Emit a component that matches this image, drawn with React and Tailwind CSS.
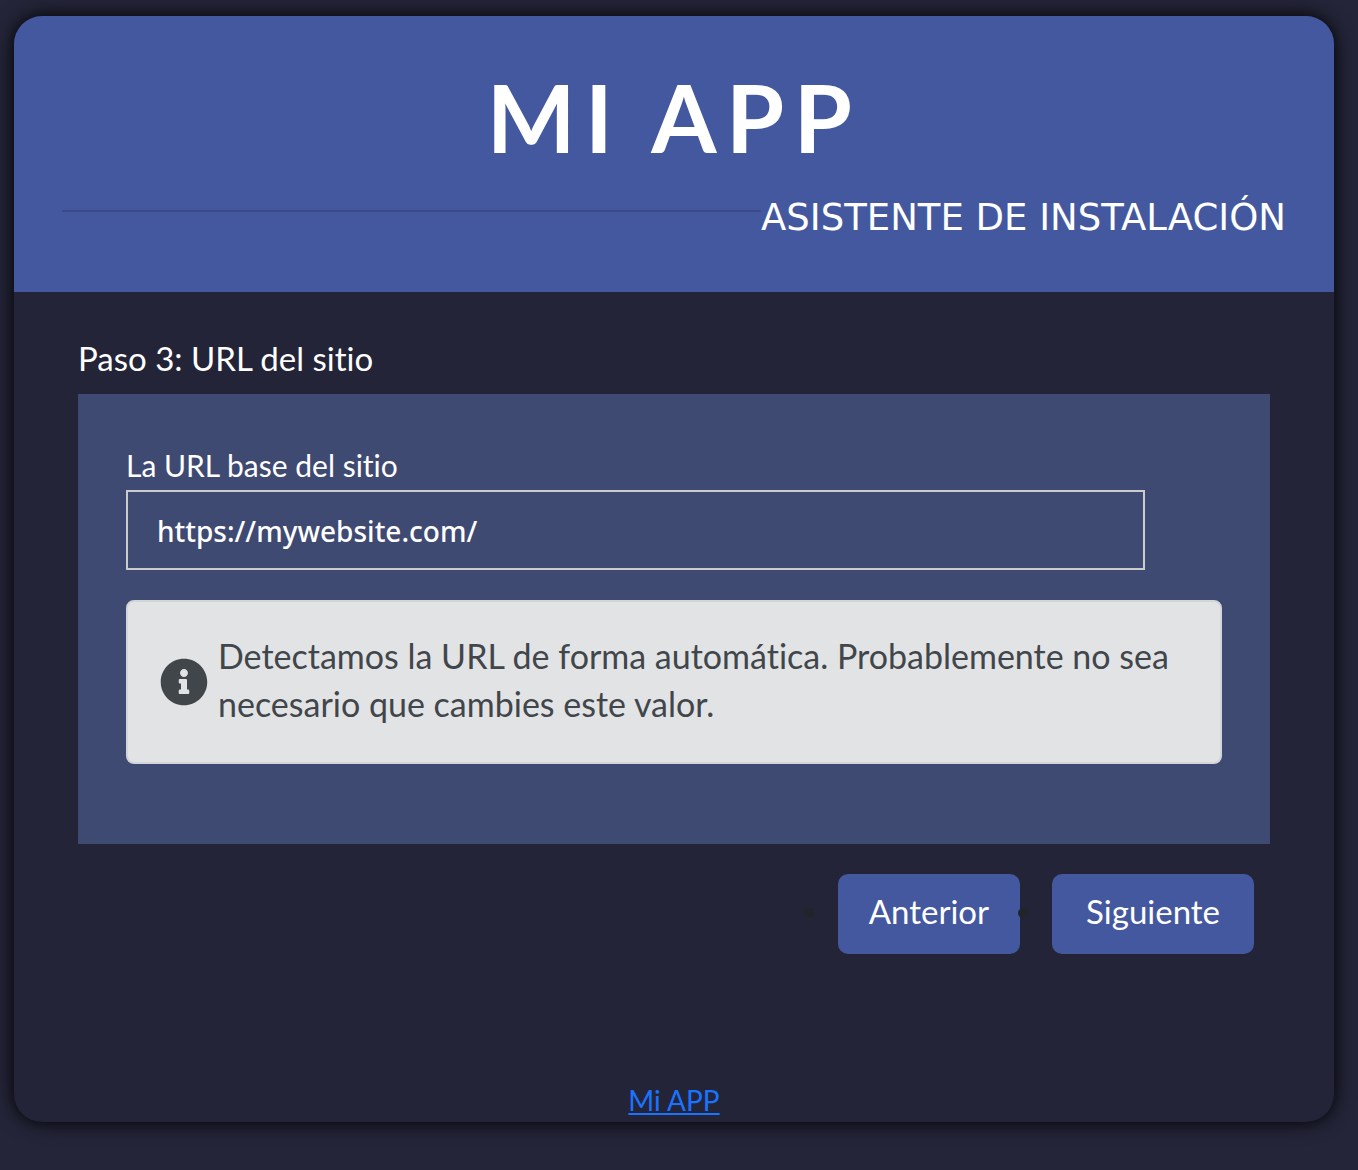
import React from "react";
import { FaInfoCircle } from "react-icons/fa";

function Header() {
  return (
    <header className="rounded-t-[28px] bg-[#44589f] px-12 pt-7 pb-[50px] text-white">
      <h1 className="mb-5 text-center text-[94px] leading-[146px] font-bold tracking-widest">
        MI APP
      </h1>
      <div className="flex items-start">
        <hr className="grow border-0 border-t-2 border-[#3d4a85]" />
        <h2 className="-mt-3 mb-1 font-['DejaVu_Sans',sans-serif] text-[37px] leading-10 font-normal">
          ASISTENTE DE INSTALACIÓN
        </h2>
      </div>
    </header>
  );
}

function UrlStep() {
  return (
    <fieldset className="block">
      <legend className="pb-[18px] text-[33px] leading-9 text-white">Paso 3: URL del sitio</legend>
      <div className="bg-[#3f4a73] px-12 pt-[50px] pb-20">
        <label htmlFor="base-url" className="block pb-1 text-[30px] leading-[42px] text-white">
          La URL base del sitio
        </label>
        <input
          id="base-url"
          type="text"
          defaultValue="https://mywebsite.com/"
          className="block h-20 w-[93%] border-2 border-[#ccc] bg-transparent px-[29px] pt-0.5 font-['Noto_Sans',sans-serif] text-[28px] font-medium text-white outline-none"
        />
        <div className="mt-[30px] flex items-center gap-[10px] rounded-lg border-2 border-[#d3d6d8] bg-[#e2e3e5] px-8 py-[30px] text-[#41464b]">
          <FaInfoCircle className="size-12 shrink-0" aria-hidden="true" />
          <p className="pb-1 text-[34px] leading-[48px]">
            Detectamos la URL de forma automática. Probablemente no sea necesario que cambies este
            valor.
          </p>
        </div>
      </div>
    </fieldset>
  );
}

function Action({ children }) {
  return (
    <li className="relative ml-8">
      <span
        className="absolute top-[34px] -left-[34px] size-[10px] rounded-full bg-[#212529]"
        aria-hidden="true"
      />
      <button
        type="button"
        className="h-20 rounded-[10px] bg-[#44589f] px-[31px] pb-1 text-[33px] text-white"
      >
        {children}
      </button>
    </li>
  );
}

export default function App() {
  return (
    <div className="min-h-screen bg-[#242539] pt-4 pr-6 pb-12 pl-[14px] font-['Lato',sans-serif] [font-variant-ligatures:none]">
      <main className="rounded-[28px] bg-[#242438] shadow-[0_0_20px_#000]">
        <Header />
        <form className="px-16 pt-12" onSubmit={(e) => e.preventDefault()}>
          <UrlStep />
          <ul className="mt-[30px] flex justify-end pr-4">
            <Action>Anterior</Action>
            <Action>
              <span className="px-[3px]">Siguiente</span>
            </Action>
          </ul>
        </form>
        <footer className="pt-[124px] text-center text-[28px] leading-[44px]">
          <a href="#" className="text-[#1a73ff] underline">
            Mi APP
          </a>
        </footer>
      </main>
    </div>
  );
}
